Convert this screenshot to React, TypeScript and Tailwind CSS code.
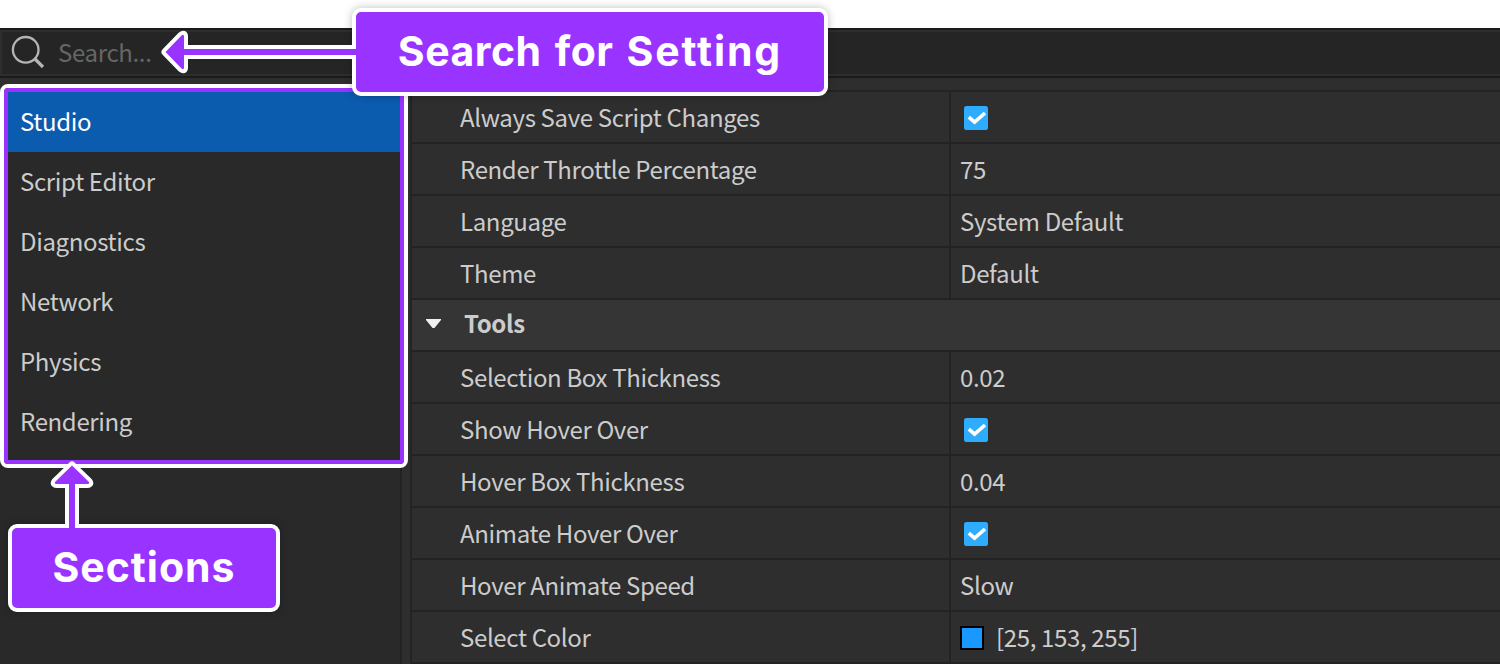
import type { ReactNode } from 'react';

type Row = { label: string; value?: string; kind?: 'check' | 'color' };

const sections = ['Studio', 'Script Editor', 'Diagnostics', 'Network', 'Physics', 'Rendering'];

const general: Row[] = [
  { label: 'Always Save Script Changes', kind: 'check' },
  { label: 'Render Throttle Percentage', value: '75' },
  { label: 'Language', value: 'System Default' },
  { label: 'Theme', value: 'Default' },
];

const tools: Row[] = [
  { label: 'Selection Box Thickness', value: '0.02' },
  { label: 'Show Hover Over', kind: 'check' },
  { label: 'Hover Box Thickness', value: '0.04' },
  { label: 'Animate Hover Over', kind: 'check' },
  { label: 'Hover Animate Speed', value: 'Slow' },
  { label: 'Select Color', value: '[25, 153, 255]', kind: 'color' },
];

function Checkbox() {
  return (
    <svg className="mt-[2px] ml-1 block h-6 w-6" viewBox="0 0 24 24">
      <rect width="24" height="24" rx="2.5" fill="#2eadff" />
      <path d="M4.8 11.2 L10.6 16.2 L21 7" fill="none" stroke="#fff" strokeWidth="3.6" />
    </svg>
  );
}

function SettingRow({ row }: { row: Row }) {
  return (
    <div className="flex h-[52px] shrink-0 border-b-2 border-[#232323]">
      <div className="flex w-[539px] items-center border-r-2 border-[#232323] pl-12">
        <span>{row.label}</span>
      </div>
      <div className="flex flex-1 items-center pl-[9px]">
        {row.kind === 'check' && <Checkbox />}
        {row.kind === 'color' && <span className="mt-[2px] mr-3 h-6 w-6 border-2 border-black bg-[#1999ff]" />}
        {row.value && <span>{row.value}</span>}
      </div>
    </div>
  );
}

function Callout({ className, children }: { className: string; children: ReactNode }) {
  return (
    <div
      className={`absolute flex h-[88px] items-center justify-center rounded-[9px] border-4 border-white bg-[#9933ff] pb-[2px] font-['Inter',sans-serif] text-[41px] font-bold tracking-[1px] whitespace-nowrap text-white shadow-[0_0_8px_rgba(0,0,0,0.25)] ${className}`}
    >
      <span>{children}</span>
    </div>
  );
}

export default function App() {
  return (
    <div className="relative flex h-[664px] w-[1500px] flex-col overflow-hidden bg-[#2e2e2e] pt-7 font-['Noto_Sans_CJK_SC',sans-serif] text-[24px] leading-[50px] tracking-[-0.35px] text-[#cccccc]">
      <div className="absolute inset-x-0 top-0 h-7 bg-white" />
      <div className="h-[50px] shrink-0 border-y-2 border-[#1b1b1b]">
        <div className="flex h-[46px] items-center border-2 border-r-0 border-[#2e2e2e] bg-[#252525]">
          <svg className="ml-2 h-10 w-10 shrink-0" viewBox="0 0 40 40" fill="none" stroke="#b5b5b5">
            <circle cx="15.7" cy="16.8" r="12.8" strokeWidth="2.3" />
            <path d="M24.5 25.5 L33 34" strokeWidth="3.2" />
          </svg>
          <span className="mb-[2px] ml-2 text-[#666666]">Search...</span>
        </div>
      </div>

      <div className="flex min-h-0 flex-1">
        <aside className="flex w-[402px] shrink-0 flex-col pt-3">
          <div className="flex flex-1 flex-col border-r-2 border-[#222222] bg-[#292929] pt-[2px]">
            {sections.map((name, i) => (
              <div
                key={name}
                className={`flex h-[60px] shrink-0 items-center pb-[2px] pl-5 ${i === 0 ? 'bg-[#0b5baf] text-white' : ''}`}
              >
                <span>{name}</span>
              </div>
            ))}
          </div>
        </aside>
        <main className="ml-2 flex flex-1 flex-col overflow-hidden pt-3">
          <div className="flex flex-col border-t-2 border-l-2 border-[#232323]">
            {general.map((row) => (
              <SettingRow key={row.label} row={row} />
            ))}
            <div className="flex h-[52px] shrink-0 items-center border-b-2 border-[#232323] bg-[#353535] pb-[3px]">
              <svg className="ml-[14px] h-[9px] w-[15px]" viewBox="0 0 15 9">
                <path d="M0 0H15V1L8.5 9H6.500L0 1Z" fill="#f0f0f0" />
              </svg>
              <span className="mb-[2px] ml-[23px] font-bold">Tools</span>
            </div>
            {tools.map((row) => (
              <SettingRow key={row.label} row={row} />
            ))}
          </div>
        </main>
      </div>

      <div className="absolute top-[84px] left-0 h-[384px] w-[408px] rounded-lg border-4 border-white">
        <div className="h-full w-full rounded-[4px] border-4 border-[#9933ff]" />
      </div>

      <Callout className="top-2 left-[352px] w-[476px] [word-spacing:3px]">
        <span className="tracking-[0.5px]">Search </span>
        <span className="tracking-[0.4px]">for </span>
        <span className="tracking-[1.9px]">Setting</span>
      </Callout>
      <Callout className="top-[524px] left-2 w-[272px]">Sections</Callout>

      <svg className="absolute inset-0 h-[664px] w-[1500px]" viewBox="0 0 1500 664" strokeLinejoin="round">
        <g fill="#9933ff">
          <path
            d="M356 49H184V36.5Q184 33.5 181.5 35.5L165.5 52L181.5 68.500Q184 70.500 184 67.500V55H356"
            stroke="#fff"
            strokeWidth="8"
          />
          <path d="M358 49H184V36.5Q184 33.5 181.5 35.5L165.500 52L181.5 68.500Q184 70.500 184 67.500V55H358Z" />
          <path
            d="M69 528V484H56.500Q53.500 484 55.500 481.500L72 465.500L88.500 481.500Q90.500 484 87.500 484H75V528"
            stroke="#fff"
            strokeWidth="8"
          />
          <path d="M69 530V484H56.500Q53.500 484 55.500 481.500L72 465.500L88.500 481.500Q90.500 484 87.500 484H75V530Z" />
        </g>
      </svg>
    </div>
  );
}
